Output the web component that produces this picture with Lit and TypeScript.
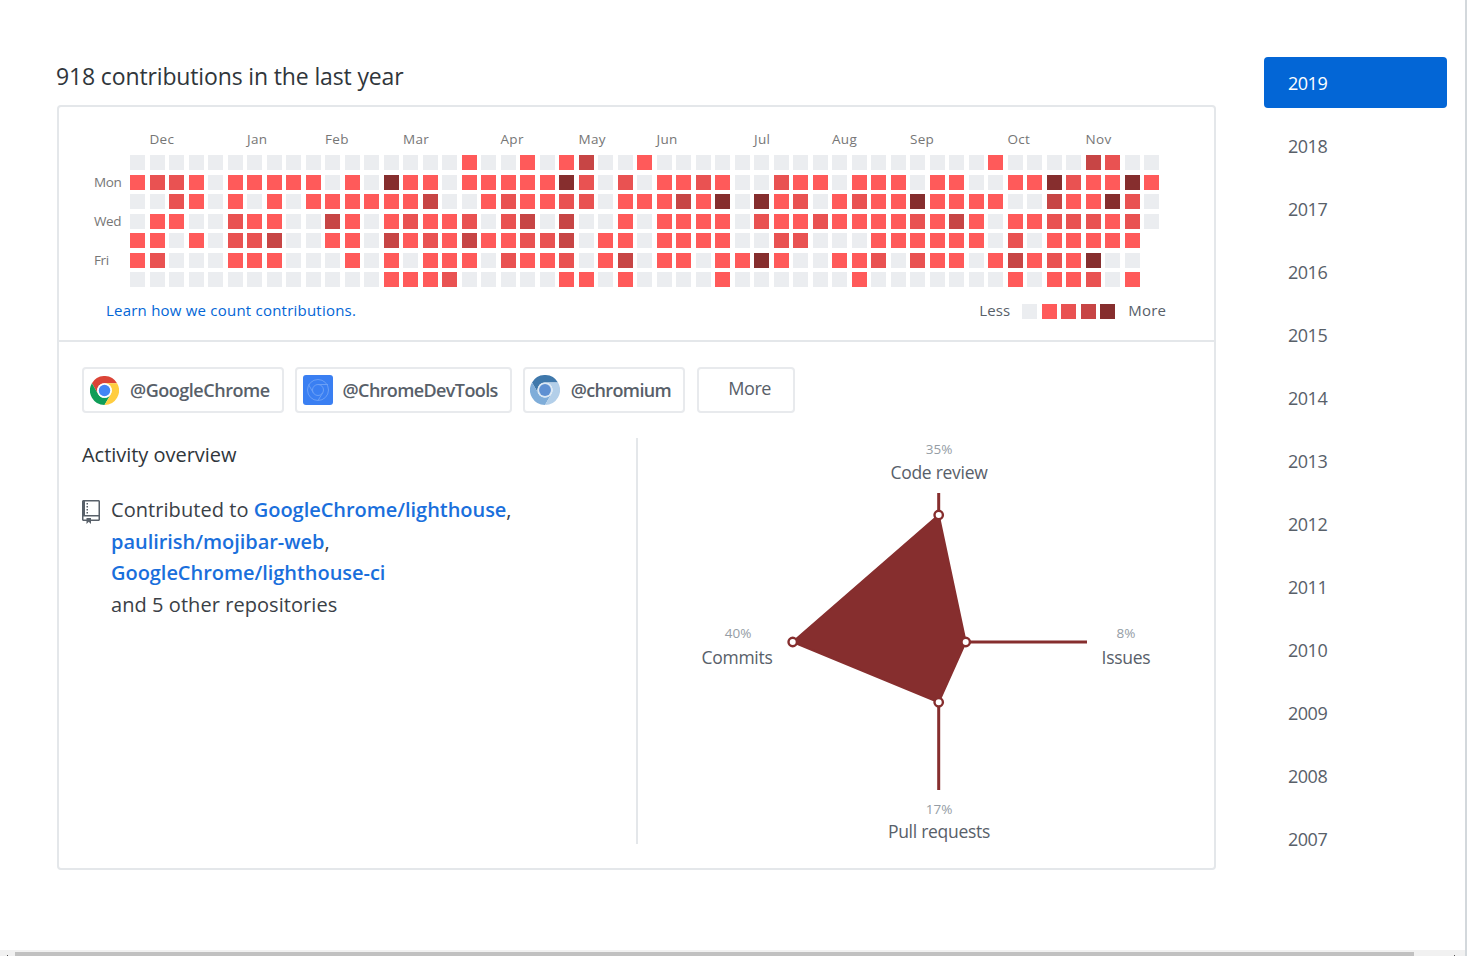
import { LitElement, html, css, svg } from "lit";
import { customElement } from "lit/decorators.js";

const ROWS = [
  "00000000000000000" + "100101300" + "1" + "00000000000000000" + "1" + "0000" + "3200",
  "12210" + "11111" + "01041" + "10111" + "11420" + "2" + "01121" + "00211" + "01110" + "11001" + "14211" + "41",
  "00210" + "10101" + "11111" + "30012" + "11220" + "1" + "11314" + "04120" + "12114" + "11110" + "03114" + "20",
  "01100" + "21100" + "31012" + "11202" + "30300" + "1" + "01111" + "02112" + "11112" + "13101" + "12221" + "20",
  "11010" + "22300" + "11031" + "21311" + "22301" + "1" + "01111" + "00220" + "00111" + "11102" + "01111" + "1.",
  "12000" + "11100" + "01010" + "11102" + "11201" + "3" + "01101" + "14100" + "11202" + "11013" + "12140" + "0.",
  "00000" + "00000" + "00011" + "12000" + "00110" + "1" + "00001" + "00000" + "01000" + "00001" + "01120" + "1.",
];

const MONTHS: [string, number][] = [
  ["Dec", 1], ["Jan", 6], ["Feb", 10], ["Mar", 14], ["Apr", 19], ["May", 23],
  ["Jun", 27], ["Jul", 32], ["Aug", 36], ["Sep", 40], ["Oct", 45], ["Nov", 49],
];

const YEARS = [2019, 2018, 2017, 2016, 2015, 2014, 2013, 2012, 2011, 2010, 2009, 2008, 2007];

const chromeLogo = (cls: string, top: string, left: string, right: string, ring: string, core: string) => html`
  <svg class="logo ${cls}" viewBox="0 0 48 48" aria-hidden="true">
    <path fill=${top} d="M3.2 12A24 24 0 0 1 44.8 12H24A12 12 0 0 0 13.6 30Z" />
    <path fill=${left} d="M3.2 12A24 24 0 0 0 24 48L34.4 30A12 12 0 0 1 13.6 30Z" />
    <path fill=${right} d="M24 48A24 24 0 0 0 44.8 12H24A12 12 0 0 1 34.4 30Z" />
    <circle cx="24" cy="24" r="12" fill=${ring} />
    <circle cx="24" cy="24" r="9.5" fill=${core} />
  </svg>`;

const devtoolsLogo = html`
  <svg class="logo square" viewBox="0 0 30 30" aria-hidden="true">
    <rect width="30" height="30" rx="3" fill="#3a7ff2" />
    <circle cx="15" cy="15" r="10.5" fill="none" stroke="#6a9ff6" stroke-width="1" />
    <circle cx="15" cy="15" r="5.5" fill="none" stroke="#6a9ff6" stroke-width="1" />
    <path d="M15 9.5H25M10.2 17.7L5.5 9.5M19.8 17.7L15 25.5" fill="none" stroke="#6a9ff6" stroke-width="1" />
  </svg>`;

const CENTER = [938.7, 642];
const POINTS = [
  [938.7, 515],
  [965.7, 642],
  [938.7, 702.3],
  [792.7, 642],
];
// x of percentage, its baseline, percentage, x of name, its baseline, name
const LABELS: [number, number, string, number, number, string][] = [
  [939, 454, "35%", 939, 479, "Code review"],
  [738, 638, "40%", 737, 664, "Commits"],
  [1126, 638, "8%", 1126, 664, "Issues"],
  [939, 814, "17%", 939, 838, "Pull requests"],
];

@customElement("app-root")
export class AppRoot extends LitElement {
  static styles = css`
    :host {
      display: flex;
      flex-direction: column;
      width: 1467px;
      height: 956px;
      overflow: hidden;
      background: #fff;
      font-family: "Open Sans", "Noto Sans", sans-serif;
      color: #24292e;
      box-sizing: border-box;
      border-right: 2px solid #d3d8dc;
    }
    .page {
      flex: 1;
      display: flex;
      min-height: 0;
    }
    .main {
      width: 1160px;
      margin-left: 56px;
      padding-top: 58px;
    }
    .title {
      margin: 0 0 11px;
      font-size: 23px;
      font-weight: 400;
      line-height: 36px;
      letter-spacing: -0.14px;
      color: #30363b;
    }
    .card {
      margin-left: 1px;
      width: 1159px;
      height: 765px;
      box-sizing: border-box;
      border: 2px solid #e4e7ea;
      border-radius: 4px;
      display: flex;
      flex-direction: column;
    }
    .top {
      height: 235px;
      box-sizing: border-box;
      padding: 24px 48px 0 35px;
      border-bottom: 2px solid #e4e7ea;
    }
    .graph {
      display: grid;
      grid-template-columns: 36px auto;
      grid-template-rows: 24px auto;
      justify-content: start;
    }
    .months {
      grid-column: 2;
      display: grid;
      grid-template-columns: repeat(53, 15px);
      column-gap: 4.5px;
      height: 16px;
    }
    .month {
      font-size: 13.5px;
      line-height: 16px;
      color: #767676;
      white-space: nowrap;
      letter-spacing: 0.3px;
    }
    .days {
      grid-column: 1;
      grid-row: 2;
      display: grid;
      grid-template-rows: repeat(7, 15px);
      row-gap: 4.5px;
      font-size: 13.5px;
      color: #767676;
      letter-spacing: -0.4px;
    }
    .day {
      line-height: 15px;
      white-space: nowrap;
    }
    .cells {
      grid-column: 2;
      grid-row: 2;
      display: grid;
      grid-auto-flow: column;
      grid-template-rows: repeat(7, 15px);
      grid-auto-columns: 15px;
      gap: 4.5px;
    }
    .c {
      width: 15px;
      height: 15px;
    }
    .l0 { background: #ebedf0; }
    .l1 { background: #ff5a5a; }
    .l2 { background: #e95252; }
    .l3 { background: #c74545; }
    .l4 { background: #862e2e; }
    .foot {
      display: flex;
      align-items: center;
      justify-content: space-between;
      margin-top: 16px;
      padding-left: 12px;
      height: 16px;
      font-size: 15px;
    }
    .learn {
      color: #0366d6;
      text-decoration: none;
      letter-spacing: 0.22px;
      margin-bottom: 2px;
    }
    .legend {
      display: flex;
      align-items: center;
      gap: 4.5px;
      color: #586069;
      letter-spacing: 0.15px;
    }
    .less { margin-right: 7.5px; margin-bottom: 2px; }
    .more { margin-left: 8.5px; margin-bottom: 2px; }
    .bottom {
      flex: 1;
      display: flex;
      flex-direction: column;
      padding: 25px 23px 24px;
      min-height: 0;
    }
    .orgs {
      display: flex;
      gap: 11px;
      height: 46px;
    }
    .org {
      display: flex;
      align-items: center;
      gap: 11px;
      box-sizing: border-box;
      height: 46px;
      padding: 0 12px 0 6px;
      border: 2px solid #e8eaed;
      border-radius: 4px;
      font-size: 18px;
      font-weight: 600;
      letter-spacing: -0.62px;
      color: #586069;
      white-space: nowrap;
    }
    .org.wide {
      letter-spacing: -0.47px;
    }
    .org.more-btn {
      padding: 0 22px 4px 29px;
      font-weight: 400;
      letter-spacing: -0.4px;
      margin-left: 1px;
    }
    .logo {
      width: 29px;
      height: 29px;
      flex: none;
    }
    .logo.square {
      width: 30px;
      height: 30px;
      margin-right: -1px;
    }
    .logo.round-lg {
      width: 30px;
      height: 30px;
      margin-left: -1px;
    }
    .overview {
      flex: 1;
      display: flex;
      margin-top: 25px;
      min-height: 0;
    }
    .activity {
      flex: none;
      width: 554px;
      border-right: 2px solid #e4e7ea;
      padding-top: 2px;
    }
    .activity h3 {
      margin: 0 0 24px;
      font-size: 20px;
      font-weight: 400;
      line-height: 30px;
      letter-spacing: -0.03px;
      color: #30363b;
    }
    .contrib {
      display: flex;
      gap: 11px;
      align-items: flex-start;
      font-size: 20px;
      line-height: 31.5px;
      letter-spacing: 0.06px;
      color: #3a4046;
    }
    .repo {
      width: 18px;
      height: 24px;
      margin-top: 6px;
      flex: none;
    }
    .contrib a {
      color: #1a6fdc;
      font-weight: 600;
      letter-spacing: -0.04px;
      text-decoration: none;
    }
    .radar {
      width: 553px;
      height: 406px;
      display: block;
      flex: none;
    }
    .radar text {
      text-anchor: middle;
      font-family: "Open Sans", "Noto Sans", sans-serif;
    }
    .pct {
      font-size: 13.5px;
      fill: #959da5;
    }
    .name {
      font-size: 17.5px;
      fill: #586069;
      letter-spacing: -0.28px;
    }
    .years {
      width: 183px;
      margin-left: 48px;
      padding-top: 57px;
      display: flex;
      flex-direction: column;
      gap: 12px;
    }
    .year {
      height: 51px;
      display: flex;
      align-items: center;
      padding-left: 24px;
      box-sizing: border-box;
      border-radius: 4px;
      font-size: 18px;
      color: #586069;
      letter-spacing: -0.5px;
    }
    .year.on {
      background: #0366d6;
      color: #fff;
    }
    .hbar {
      height: 6px;
      background: #f1f1f1;
      display: flex;
      align-items: flex-end;
      margin-right: -2px;
    }
    .thumb {
      width: 1399px;
      height: 4px;
      background: #c1c1c1;
    }
    .arrow {
      width: 15px;
      flex: none;
      display: flex;
      justify-content: center;
    }
    .arrow::before {
      content: "";
      width: 1px;
      height: 1px;
      background: #505050;
    }
    .arrow.end {
      margin-left: 33px;
    }
  `;

  render() {
    const cols = ROWS[0].length;
    const cells = [];
    for (let c = 0; c < cols; c++) {
      for (let r = 0; r < 7; r++) {
        const v = ROWS[r][c];
        cells.push(html`<div class="c ${v === "." ? "" : "l" + v}"></div>`);
      }
    }
    const poly = POINTS.map((p) => p.join(",")).join(" ");
    return html`
      <div class="page">
        <div class="main">
          <h2 class="title">918 contributions in the last year</h2>
          <section class="card">
            <div class="top">
              <div class="graph">
                <div class="months">
                  ${MONTHS.map(
                    ([m, c]) => html`<span class="month" style="grid-column:${c + 1}">${m}</span>`
                  )}
                </div>
                <div class="days">
                  <span></span><span class="day">Mon</span><span></span><span class="day">Wed</span
                  ><span></span><span class="day">Fri</span><span></span>
                </div>
                <div class="cells">${cells}</div>
              </div>
              <div class="foot">
                <a class="learn" href="#">Learn how we count contributions.</a>
                <div class="legend">
                  <span class="less">Less</span>
                  <div class="c l0"></div>
                  <div class="c l1"></div>
                  <div class="c l2"></div>
                  <div class="c l3"></div>
                  <div class="c l4"></div>
                  <span class="more">More</span>
                </div>
              </div>
            </div>
            <div class="bottom">
              <div class="orgs">
                <div class="org wide">
                  ${chromeLogo("", "#db4437", "#0f9d58", "#ffcd40", "#fff", "#4285f4")} @GoogleChrome
                </div>
                <div class="org">${devtoolsLogo} @ChromeDevTools</div>
                <div class="org">
                  ${chromeLogo("round-lg", "#3f78ab", "#7fadd9", "#b3cfe9", "#dbe8f4", "#5e90d2")} @chromium
                </div>
                <div class="org more-btn">More</div>
              </div>
              <div class="overview">
                <div class="activity">
                  <h3>Activity overview</h3>
                  <div class="contrib">
                    <svg class="repo" viewBox="0 0 12 16" aria-hidden="true">
                      <path
                        fill="#586069"
                        fill-rule="evenodd"
                        d="M4 9H3V8h1v1zm0-3H3v1h1V6zm0-2H3v1h1V4zm0-2H3v1h1V2zm8-1v12c0 .55-.45 1-1 1H6v2l-1.5-1.5L3 16v-2H1c-.55 0-1-.45-1-1V1c0-.55.45-1 1-1h10c.55 0 1 .45 1 1zm-1 10H1v2h2v-1h3v1h5v-2zm0-10H2v9h9V1z"
                      />
                    </svg>
                    <div>
                      Contributed to <a href="#">GoogleChrome/lighthouse</a>,<br />
                      <a href="#">paulirish/mojibar-web</a>,<br />
                      <a href="#">GoogleChrome/lighthouse-ci</a><br />
                      and 5 other repositories
                    </div>
                  </div>
                </div>
                <svg class="radar" viewBox="638 438 553 406">
                  ${svg`
                    <g stroke="#862e2e" stroke-width="3" fill="none">
                      <path d="M${CENTER[0]} 493V790M${CENTER[0]} ${CENTER[1]}H1087" />
                    </g>
                    <polygon points=${poly} fill="#862e2e" stroke="#862e2e" stroke-width="2" stroke-linejoin="round" />
                    ${POINTS.map(
                      ([x, y]) =>
                        svg`<circle cx=${x} cy=${y} r="4.2" fill="#fff" stroke="#862e2e" stroke-width="2.4" />`
                    )}
                    ${LABELS.map(
                      ([px, py, p, nx, ny, n]) => svg`
                        <text class="pct" x=${px} y=${py}>${p}</text>
                        <text class="name" x=${nx} y=${ny}>${n}</text>`
                    )}
                  `}
                </svg>
              </div>
            </div>
          </section>
        </div>
        <nav class="years">
          ${YEARS.map((y, i) => html`<div class="year ${i === 0 ? "on" : ""}">${y}</div>`)}
        </nav>
      </div>
      <div class="hbar">
        <div class="arrow"></div>
        <div class="thumb"></div>
        <div class="arrow end"></div>
      </div>
    `;
  }
}
